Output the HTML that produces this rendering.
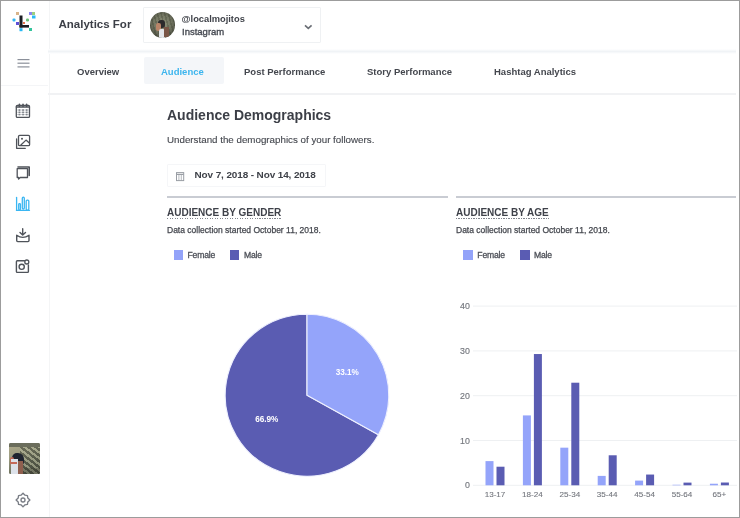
<!DOCTYPE html>
<html><head><meta charset="utf-8">
<style>
*{margin:0;padding:0;box-sizing:border-box}
html,body{width:740px;height:518px;overflow:hidden;background:#fff}
body{position:relative;font-family:"Liberation Sans",sans-serif;color:#3e4149}
#w{position:absolute;left:0;top:0;width:740px;height:518px;filter:blur(0.5px)}
.a{position:absolute;white-space:nowrap}
.frame{position:absolute;left:0;top:0;width:740px;height:518px;border:1px solid #9c9c9c;pointer-events:none}
.rg{-webkit-text-stroke:0.25px currentColor}
.sb{position:absolute;left:0;top:0;width:49.5px;height:518px;border-right:1.5px solid #f4f5f6}
.hline{position:absolute;height:1.5px;background:#f1f2f4}
.tab{position:absolute;top:66px;font-size:9.5px;font-weight:700;color:#44474e;line-height:12px}
</style></head><body><div id="w">

<!-- sidebar -->
<div class="sb"></div>
<div class="a" style="left:0;top:84.5px;width:48px;height:1.5px;background:#f4f5f7"></div>

<!-- logo -->
<svg class="a" style="left:0;top:0" width="48" height="40" viewBox="0 0 48 40">
  <rect x="16" y="12" width="3" height="3" fill="#d9b48a"/>
  <rect x="29" y="12" width="3" height="3" fill="#8c84f0"/>
  <rect x="32" y="12" width="3" height="3" fill="#9ccf7e"/>
  <rect x="32" y="15.5" width="3.5" height="3" fill="#2bb9f5"/>
  <rect x="12.5" y="18.5" width="3" height="3" rx="1" fill="#36b6f2"/>
  <rect x="26" y="18.5" width="3" height="3" rx="1.2" fill="#6cc27a"/>
  <rect x="16" y="22" width="3" height="3" fill="#5d4fd6"/>
  <rect x="19.5" y="15.5" width="3" height="12" fill="#1b1d22"/>
  <rect x="19.5" y="25" width="9.5" height="2.6" fill="#1b1d22"/>
  <rect x="23" y="22" width="2" height="2" fill="#e5734a"/>
  <rect x="19.5" y="28.2" width="3" height="3" fill="#26b8f3"/>
  <rect x="29" y="28" width="3" height="3" fill="#33c49c"/>
</svg>

<!-- hamburger -->
<svg class="a" style="left:0;top:50px" width="48" height="30">
  <g stroke="#8b909a" stroke-width="1.2"><line x1="17.5" y1="9.6" x2="29.5" y2="9.6"/><line x1="17.5" y1="13.2" x2="29.5" y2="13.2"/><line x1="17.5" y1="16.9" x2="29.5" y2="16.9"/></g>
</svg>

<!-- sidebar icons -->
<svg class="a" style="left:0;top:96px" width="48" height="190" viewBox="0 96 48 190" fill="none" stroke="#4f535a" stroke-width="1.3" stroke-linejoin="round" stroke-linecap="round">
  <!-- calendar -->
  <rect x="16.3" y="105.4" width="13.2" height="12" rx="1"/>
  <line x1="16.5" y1="107" x2="29.3" y2="107" stroke-width="1.6"/>
  <line x1="19.4" y1="104.2" x2="19.4" y2="106.4" stroke-width="1.5"/><line x1="23" y1="104.2" x2="23" y2="106.4" stroke-width="1.5"/><line x1="26.6" y1="104.2" x2="26.6" y2="106.4" stroke-width="1.5"/>
  <g stroke="none" fill="#6a6e75"><rect x="18.6" y="109.3" width="1.7" height="1.5"/><rect x="22.2" y="109.3" width="1.7" height="1.5"/><rect x="25.8" y="109.3" width="1.7" height="1.5"/>
  <rect x="18.6" y="111.6" width="1.7" height="1.5"/><rect x="22.2" y="111.6" width="1.7" height="1.5"/><rect x="25.8" y="111.6" width="1.7" height="1.5"/>
  <rect x="18.6" y="113.8" width="1.7" height="1.5"/><rect x="22.2" y="113.8" width="1.7" height="1.5"/><rect x="25.8" y="113.8" width="1.7" height="1.5"/></g>
  <g stroke-width="0.5" stroke="#9a9ea6"><line x1="17.5" y1="110" x2="28.5" y2="110"/><line x1="17.5" y1="112.3" x2="28.5" y2="112.3"/><line x1="17.5" y1="114.5" x2="28.5" y2="114.5"/></g>
  <!-- images -->
  <path d="M16.6 139 V148.3 H25.3"/>
  <rect x="18.5" y="135.4" width="11.1" height="10.3" rx="1.2"/>
  <circle cx="22" cy="138.7" r="1" fill="#4f535a" stroke="none"/>
  <path d="M20.9 145 L26 140.1 L29.3 143"/>
  <!-- chat -->
  <path d="M18 167 H29.2 V175.5" stroke-width="1.6"/>
  <path d="M17.2 168.6 H27.5 V177.5 H20.2 L18.6 179 V177.5 H17.2 Z" />
  <!-- download -->
  <path d="M22.7 228.8 V234.4 M20 232.4 L22.7 235 L25.5 232.4" stroke-width="1.4"/>
  <path d="M16.7 235.2 Q22.8 239.6 29 235.2 V240.6 Q29 241.6 28 241.6 H17.7 Q16.7 241.6 16.7 240.6 Z" stroke-width="1.4"/>
  <!-- insta -->
  <path d="M24.4 260.8 H17.3 Q16.4 260.8 16.4 261.7 V271.5 Q16.4 272.4 17.3 272.4 H27.5 Q28.4 272.4 28.4 271.5 V265" stroke-width="1.4"/>
  <circle cx="21.7" cy="266.8" r="2.6" stroke-width="1.4"/>
  <circle cx="26.8" cy="262" r="2" stroke-width="1.3"/>
</svg>
<!-- bar chart icon -->
<svg class="a" style="left:0;top:190px" width="48" height="26" viewBox="0 190 48 26" fill="none" stroke="#3ab6f2" stroke-width="1.3" stroke-linejoin="round" stroke-linecap="round">
  <line x1="16.4" y1="210.3" x2="29.5" y2="210.3"/>
  <path d="M16.6 210.2 V197.4"/>
  <rect x="18.7" y="203.6" width="1.7" height="6.5" rx="0.8"/>
  <rect x="22.3" y="197.2" width="2" height="11.8" rx="1"/>
  <rect x="26.2" y="200.1" width="2.6" height="10" rx="1"/>
</svg>

<!-- avatar photo -->
<div class="a" style="left:9.3px;top:443.3px;width:30.8px;height:30.8px;border-radius:1.5px;overflow:hidden;background:linear-gradient(160deg,#b0aa8a 0%,#9d9d82 35%,#7e816b 60%,#5c5f50 100%)">
  <div class="a" style="left:11px;top:2px;width:20px;height:29px;background:repeating-linear-gradient(38deg,rgba(175,178,150,.5) 0 2.2px,rgba(45,50,40,.5) 2.2px 4.6px)"></div>
  <div class="a" style="left:0;top:0;width:31px;height:3.5px;background:#6b6d5c"></div>
  <div class="a" style="left:3px;top:9.5px;width:11.5px;height:12px;border-radius:5px 6px 3px 4px;background:#1f2430"></div>
  <div class="a" style="left:0.5px;top:13.5px;width:4.5px;height:8px;border-radius:2px;background:#c06a58"></div>
  <div class="a" style="left:1.5px;top:16px;width:7.5px;height:15px;background:#dde2ea"></div>
  <div class="a" style="left:1.5px;top:19.2px;width:6.5px;height:1.4px;background:#c66a5a"></div>
  <div class="a" style="left:9px;top:18px;width:5px;height:13px;background:#8f5f4f"></div>
  <div class="a" style="left:14px;top:25px;width:17px;height:6px;background:rgba(55,55,45,.3)"></div>
</div>
<!-- gear -->
<svg class="a" style="left:13.85px;top:490.85px" width="18" height="18" viewBox="0 0 18 18" fill="none" stroke="#7a7e86" stroke-width="1.35" stroke-linejoin="round">
  <path d="M9.00 2.10 L10.99 4.20 L13.45 4.55 L13.80 7.01 L15.90 9.00 L13.80 10.99 L13.45 13.45 L10.99 13.80 L9.00 15.90 L7.01 13.80 L4.55 13.45 L4.20 10.99 L2.10 9.00 L4.20 7.01 L4.55 4.55 L7.01 4.20 Z"/>
  <circle cx="9" cy="9" r="2"/>
</svg>

<!-- header -->
<div class="a" style="left:48px;top:48.5px;width:688px;height:5px;background:linear-gradient(#fff,#f0f3f6 50%,#fff)"></div>
<div class="a" style="left:58.5px;top:17px;font-size:11.5px;font-weight:700;color:#3c3f47;line-height:14px">Analytics For</div>
<div class="a" style="left:143px;top:7px;width:178px;height:36px;border:1px solid #eff1f3;border-radius:1px"></div>
<div class="a" style="left:149.5px;top:12px;width:25px;height:25.5px;border-radius:50%;overflow:hidden;filter:blur(0.4px);background:radial-gradient(circle at 50% 45%,#8f927a 0,#737662 45%,#4d4f42 78%,#34362e 100%)">
  <div class="a" style="left:0;top:0;width:25px;height:25px;background:repeating-linear-gradient(75deg,rgba(0,0,0,0) 0 2px,rgba(40,45,30,.25) 2px 3.5px)"></div>
  <div class="a" style="left:8px;top:8px;width:7px;height:8px;border-radius:3px;background:#2c2a2c"></div>
  <div class="a" style="left:6px;top:11px;width:5px;height:8px;border-radius:2px;background:#b98468"></div>
  <div class="a" style="left:9px;top:17px;width:6px;height:9px;border-radius:2px 2px 0 0;background:#e4e6ea"></div>
  <div class="a" style="left:14px;top:15px;width:5px;height:10px;background:#7a5647"></div>
</div>
<div class="a" style="left:181.5px;top:12.5px;font-size:9.3px;font-weight:700;color:#3f4249;line-height:12px">@localmojitos</div>
<div class="a rg" style="-webkit-text-stroke:0.35px #464a52;left:182px;top:26px;font-size:9.5px;font-weight:400;color:#464a52;line-height:12px">Instagram</div>
<svg class="a" style="left:302px;top:22px" width="12" height="10"><path d="M3 3.3 L6.3 6.4 L9.6 3.3" fill="none" stroke="#6a6e75" stroke-width="1.6"/></svg>

<!-- tabs -->
<div class="a" style="left:144.3px;top:57.3px;width:79.7px;height:26.8px;background:#f4f6f9;border-radius:2px"></div>
<div class="tab" style="left:77px">Overview</div>
<div class="tab" style="left:161px;color:#3cb5ee">Audience</div>
<div class="tab" style="left:244px">Post Performance</div>
<div class="tab" style="left:367px">Story Performance</div>
<div class="tab" style="left:494px">Hashtag Analytics</div>
<div class="hline" style="left:48px;top:93.2px;width:688px"></div>

<!-- content header -->
<div class="a" style="left:167px;top:106.8px;font-size:14px;font-weight:700;color:#3c3f47;line-height:17px">Audience Demographics</div>
<div class="a rg" style="-webkit-text-stroke:0.12px currentColor;left:167px;top:134px;font-size:9.77px;color:#44474e;line-height:12px">Understand the demographics of your followers.</div>

<div class="a" style="left:167px;top:164px;width:159px;height:23px;border:1px solid #f5f6f8;border-radius:1px"></div>
<svg class="a" style="left:175px;top:171px" width="12" height="11" fill="none" stroke="#9a9ea5" stroke-width="1"><rect x="1.5" y="1.6" width="7.2" height="8"/><line x1="1.5" y1="3.4" x2="8.7" y2="3.4" stroke-width="1.2"/><line x1="3.9" y1="4" x2="3.9" y2="9.5" stroke-width="0.7"/><line x1="6.3" y1="4" x2="6.3" y2="9.5" stroke-width="0.7"/></svg>
<div class="a" style="left:194.5px;top:169.2px;font-size:9.95px;font-weight:700;color:#3f4249;line-height:12.5px;letter-spacing:-0.1px">Nov 7, 2018 - Nov 14, 2018</div>

<!-- section lines -->
<div class="a" style="left:167px;top:196px;width:281px;height:1.6px;background:#c9ccd3"></div>
<div class="a" style="left:456px;top:196px;width:280px;height:1.6px;background:#c9ccd3"></div>

<!-- gender -->
<div class="a" style="left:167px;top:206.5px;font-size:10px;font-weight:700;color:#3e4149;line-height:12px">AUDIENCE BY GENDER</div>
<div class="a" style="left:167px;top:217.7px;width:114px;height:1.1px;background:repeating-linear-gradient(90deg,#82868e 0 1.3px,transparent 1.3px 2.5px)"></div>
<div class="a rg" style="left:167px;top:224.6px;font-size:8.5px;color:#44474e;line-height:11px">Data collection started October 11, 2018.</div>
<div class="a" style="left:173.5px;top:250.4px;width:9.3px;height:9.4px;background:#93a3f9"></div>
<div class="a rg" style="left:187.5px;top:250px;font-size:8.6px;letter-spacing:-0.17px;color:#4d5058;-webkit-text-stroke:0.3px #4d5058;line-height:11px">Female</div>
<div class="a" style="left:230px;top:250.4px;width:9.3px;height:9.4px;background:#5a5cb3"></div>
<div class="a rg" style="left:244px;top:250px;font-size:8.6px;letter-spacing:-0.17px;color:#4d5058;-webkit-text-stroke:0.3px #4d5058;line-height:11px">Male</div>

<!-- pie -->
<svg class="a" style="left:0;top:0" width="740" height="518">
  <g stroke="#eef0fe" stroke-width="1.1">
  <path fill="#5a5cb2" d="M307.0 395.2 L378.43 434.67 A81.8 81 0 1 1 307.00 314.20 Z"/>
  <path fill="#94a4fa" d="M307.0 395.2 L307.00 314.20 A81.8 81 0 0 1 378.43 434.67 Z"/>
  </g>
</svg>
<div class="a" style="left:335.8px;top:367.6px;font-size:8.2px;font-weight:700;color:#fff;line-height:10px;letter-spacing:-0.05px">33.1%</div>
<div class="a" style="left:255.3px;top:415.2px;font-size:8.2px;font-weight:700;color:#fff;line-height:10px;letter-spacing:-0.05px">66.9%</div>

<!-- age -->
<div class="a" style="left:456px;top:206.5px;font-size:10px;font-weight:700;color:#3e4149;line-height:12px">AUDIENCE BY AGE</div>
<div class="a" style="left:456px;top:217.7px;width:93px;height:1.1px;background:repeating-linear-gradient(90deg,#82868e 0 1.3px,transparent 1.3px 2.5px)"></div>
<div class="a rg" style="left:456px;top:224.6px;font-size:8.5px;color:#44474e;line-height:11px">Data collection started October 11, 2018.</div>
<div class="a" style="left:463.3px;top:250.4px;width:9.3px;height:9.4px;background:#93a3f9"></div>
<div class="a rg" style="left:477.3px;top:250px;font-size:8.6px;letter-spacing:-0.17px;color:#4d5058;-webkit-text-stroke:0.3px #4d5058;line-height:11px">Female</div>
<div class="a" style="left:520.4px;top:250.4px;width:9.3px;height:9.4px;background:#5a5cb3"></div>
<div class="a rg" style="left:534px;top:250px;font-size:8.6px;letter-spacing:-0.17px;color:#4d5058;-webkit-text-stroke:0.3px #4d5058;line-height:11px">Male</div>

<svg class="a" style="left:0;top:0" width="740" height="518">
<line x1="473" y1="306.10" x2="737" y2="306.10" stroke="#eef0f2" stroke-width="1"/>
<text x="469.8" y="309.20" text-anchor="end" font-family="Liberation Sans" font-size="8.8" fill="#74777e" stroke="#74777e" stroke-width="0.15">40</text>
<line x1="473" y1="350.90" x2="737" y2="350.90" stroke="#eef0f2" stroke-width="1"/>
<text x="469.8" y="354.00" text-anchor="end" font-family="Liberation Sans" font-size="8.8" fill="#74777e" stroke="#74777e" stroke-width="0.15">30</text>
<line x1="473" y1="395.70" x2="737" y2="395.70" stroke="#eef0f2" stroke-width="1"/>
<text x="469.8" y="398.80" text-anchor="end" font-family="Liberation Sans" font-size="8.8" fill="#74777e" stroke="#74777e" stroke-width="0.15">20</text>
<line x1="473" y1="440.50" x2="737" y2="440.50" stroke="#eef0f2" stroke-width="1"/>
<text x="469.8" y="443.60" text-anchor="end" font-family="Liberation Sans" font-size="8.8" fill="#74777e" stroke="#74777e" stroke-width="0.15">10</text>
<line x1="473" y1="485.30" x2="737" y2="485.30" stroke="#eef0f2" stroke-width="1"/>
<text x="469.8" y="488.40" text-anchor="end" font-family="Liberation Sans" font-size="8.8" fill="#74777e" stroke="#74777e" stroke-width="0.15">0</text>
<rect x="485.50" y="461.11" width="8" height="24.19" fill="#94a4fa"/>
<rect x="496.50" y="466.71" width="8" height="18.59" fill="#5a5cb2"/>
<text x="495.00" y="497.40" text-anchor="middle" font-family="Liberation Sans" font-size="8.1" fill="#74777e" stroke="#74777e" stroke-width="0.12">13-17</text>
<rect x="522.90" y="415.41" width="8" height="69.89" fill="#94a4fa"/>
<rect x="533.90" y="354.04" width="8" height="131.26" fill="#5a5cb2"/>
<text x="532.40" y="497.40" text-anchor="middle" font-family="Liberation Sans" font-size="8.1" fill="#74777e" stroke="#74777e" stroke-width="0.12">18-24</text>
<rect x="560.30" y="447.67" width="8" height="37.63" fill="#94a4fa"/>
<rect x="571.30" y="382.71" width="8" height="102.59" fill="#5a5cb2"/>
<text x="569.80" y="497.40" text-anchor="middle" font-family="Liberation Sans" font-size="8.1" fill="#74777e" stroke="#74777e" stroke-width="0.12">25-34</text>
<rect x="597.70" y="475.89" width="8" height="9.41" fill="#94a4fa"/>
<rect x="608.70" y="455.28" width="8" height="30.02" fill="#5a5cb2"/>
<text x="607.20" y="497.40" text-anchor="middle" font-family="Liberation Sans" font-size="8.1" fill="#74777e" stroke="#74777e" stroke-width="0.12">35-44</text>
<rect x="635.10" y="480.60" width="8" height="4.70" fill="#94a4fa"/>
<rect x="646.10" y="474.55" width="8" height="10.75" fill="#5a5cb2"/>
<text x="644.60" y="497.40" text-anchor="middle" font-family="Liberation Sans" font-size="8.1" fill="#74777e" stroke="#74777e" stroke-width="0.12">45-54</text>
<rect x="672.50" y="484.76" width="8" height="0.54" fill="#94a4fa"/>
<rect x="683.50" y="482.61" width="8" height="2.69" fill="#5a5cb2"/>
<text x="682.00" y="497.40" text-anchor="middle" font-family="Liberation Sans" font-size="8.1" fill="#74777e" stroke="#74777e" stroke-width="0.12">55-64</text>
<rect x="709.90" y="483.73" width="8" height="1.57" fill="#94a4fa"/>
<rect x="720.90" y="482.52" width="8" height="2.78" fill="#5a5cb2"/>
<text x="719.40" y="497.40" text-anchor="middle" font-family="Liberation Sans" font-size="8.1" fill="#74777e" stroke="#74777e" stroke-width="0.12">65+</text>
</svg>

<div class="frame"></div>
</div>

</body></html>
